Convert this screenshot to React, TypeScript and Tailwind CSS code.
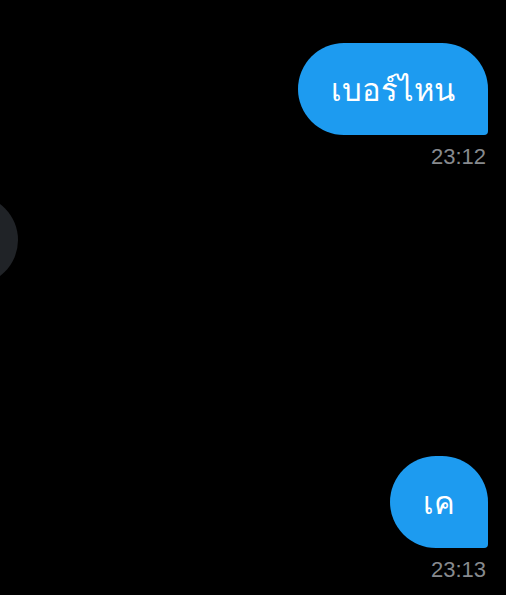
function Bubble({ text, time }: { text: string; time: string }) {
  return (
    <div className="flex flex-col items-end">
      <div className="flex h-[92px] items-center rounded-[46px] rounded-br-[4px] bg-[#1d9bf0] px-[33px]">
        <span className="text-[31px] leading-none text-white">{text}</span>
      </div>
      <span
        className="mt-[11px] mr-[2px] text-[22px] leading-[22px] text-[#878a8e]"
        style={{ fontFamily: '"Liberation Sans", Arial, sans-serif' }}
      >
        {time}
      </span>
    </div>
  );
}

export default function App() {
  return (
    <div
      className="relative h-[595px] w-[506px] overflow-hidden bg-black pt-[43px] pr-[18px]"
      style={{ fontFamily: '"Noto Sans", "Liberation Sans", sans-serif' }}
    >
      <Bubble text="เบอร์ไหน" time="23:12" />
      <div className="absolute left-[-72px] top-[195px] h-[90px] w-[90px] rounded-full bg-[#202327]" />
      <div className="mt-[288px]">
        <Bubble text="เค" time="23:13" />
      </div>
    </div>
  );
}
